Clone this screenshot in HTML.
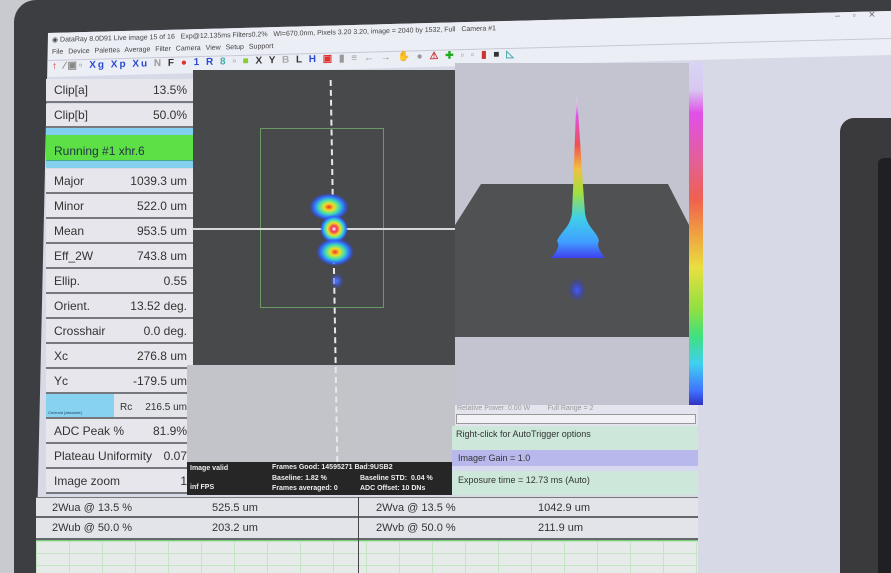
<!DOCTYPE html>
<html><head><meta charset="utf-8"><style>
*{margin:0;padding:0;box-sizing:border-box}
html{width:891px;height:573px;overflow:hidden}
body{width:891px;height:573px;overflow:hidden;background:#c9cad0;position:relative;font-family:"Liberation Sans",sans-serif}
.abs{position:absolute}
.bezel{left:14px;top:0;width:877px;height:573px;background:#3d3e41;border-top-left-radius:22px}
.screen{left:0;top:0;width:891px;height:573px;background:#d7d9e7;clip-path:polygon(48px 33px,891px 11px,891px 573px,36px 573px)}
.hdr{left:48px;top:33px;width:843px;height:44px;transform:skewY(-1.5deg);transform-origin:0 0;background:#eceef6;font-size:7px;color:#444}
.hdr .t{position:absolute;left:4px;top:3px;white-space:nowrap}
.hdr .m{position:absolute;left:4px;top:16px;white-space:nowrap;word-spacing:3px}
.hdr .tb{position:absolute;left:0;top:27px;width:843px;height:15px;border-top:1px solid #c8c8d4;font-size:10px;font-weight:bold;padding-left:4px;white-space:nowrap;letter-spacing:2px;color:#2a4ad0}
.row{position:absolute;left:46px;width:147px;background:#e6e6ec;border-bottom:2px solid #77787e;font-size:12px;color:#333}
.row span{position:absolute;left:8px;bottom:4px}
.row b{position:absolute;right:6px;bottom:4px;font-weight:normal}
.st{font-size:7px;color:#eee;position:absolute;white-space:nowrap;font-weight:bold}
.bt{position:absolute;background:#e3e4ea;border-bottom:2px solid #66676c;font-size:11px;color:#333}
.bt span{position:absolute;top:4px;white-space:nowrap}
</style></head><body>
<div class="abs bezel"></div>
<div class="abs screen"></div>
<div class="abs hdr">
 <div class="t">◉ DataRay 8.0D91 Live image 15 of 16 &nbsp; Exp@12.135ms Filters0.2% &nbsp; WI=670.0nm, Pixels 3.20 3.20, image = 2040 by 1532, Full &nbsp; Camera #1</div>
 <div class="m">File Device Palettes Average Filter Camera View Setup Support</div>
 <div class="tb"><span style="color:#d03020">↑</span> <span style="color:#888">⁄▣▫</span> Xg Xp Xu <span style="color:#999">N</span> <span style="color:#333">F</span> <span style="color:#e03030">●</span> 1 R <span style="color:#4aa">8</span> <span style="color:#888">▫</span> <span style="color:#8c3">■</span> <span style="color:#333">X Y</span> <span style="color:#aaa">B</span> <span style="color:#333">L</span> H <span style="color:#e03030">▣</span> <span style="color:#999">▮ ≡ ← → ✋ ●</span> <span style="color:#c33">⚠</span> <span style="color:#2a2">✚</span> <span style="color:#999">▫ ▫</span> <span style="color:#c33">▮</span> <span style="color:#333">■</span> <span style="color:#4aa">◺</span></div>
</div>
<!-- left panel -->
<div class="row" style="top:79px;height:24px"><span>Clip[a]</span><b>13.5%</b></div>
<div class="row" style="top:104px;height:24px"><span>Clip[b]</span><b>50.0%</b></div>
<div class="abs" style="left:46px;top:128px;width:147px;height:7px;background:#82d0ee"></div>
<div class="abs" style="left:46px;top:135px;width:147px;height:26px;background:#5de046;border-bottom:1px solid #4a8;font-size:12px;color:#234;padding:9px 0 0 8px">Running #1 xhr.6</div>
<div class="abs" style="left:46px;top:161px;width:147px;height:7px;background:#82d0ee"></div>
<div class="row" style="top:169px;height:25px"><span>Major</span><b>1039.3 um</b></div>
<div class="row" style="top:194px;height:25px"><span>Minor</span><b>522.0 um</b></div>
<div class="row" style="top:219px;height:25px"><span>Mean</span><b>953.5 um</b></div>
<div class="row" style="top:244px;height:25px"><span>Eff_2W</span><b>743.8 um</b></div>
<div class="row" style="top:269px;height:25px"><span>Ellip.</span><b>0.55</b></div>
<div class="row" style="top:294px;height:25px"><span>Orient.</span><b>13.52 deg.</b></div>
<div class="row" style="top:319px;height:25px"><span>Crosshair</span><b>0.0 deg.</b></div>
<div class="row" style="top:344px;height:25px"><span>Xc</span><b>276.8 um</b></div>
<div class="row" style="top:369px;height:25px"><span>Yc</span><b>-179.5 um</b></div>
<div class="row" style="top:394px;height:25px;background:#e3e4ea"><div class="abs" style="left:0;top:0;width:68px;height:23px;background:#86d2f0;font-size:4px;color:#246;padding:16px 0 0 2px">Centroid [absolute]</div><span style="left:74px;font-size:10px">Rc</span><b style="font-size:10px">216.5 um</b></div>
<div class="row" style="top:419px;height:25px"><span>ADC Peak %</span><b>81.9%</b></div>
<div class="row" style="top:444px;height:25px"><span>Plateau Uniformity</span><b>0.07</b></div>
<div class="row" style="top:469px;height:25px"><span>Image zoom</span><b>1</b></div>
<!-- center -->
<div class="abs" style="left:193px;top:70px;width:262px;height:295px;background:#48494b"></div>
<div class="abs" style="left:187px;top:365px;width:268px;height:97px;background:#c3c4c9"></div>
<div class="abs" style="left:260px;top:128px;width:124px;height:180px;border:1px solid #6a9a62"></div>
<div class="abs" style="left:192px;top:228px;width:263px;height:2px;background:#d8d8d8"></div>
<div class="abs" style="left:333px;top:80px;width:0;height:382px;border-left:2px dashed #e8e8e8;transform:skewX(1deg)"></div>
<svg class="abs" style="left:300px;top:185px" width="70" height="120">
<defs><radialGradient id="b"><stop offset="0" stop-color="#f03030"/><stop offset=".25" stop-color="#f0e020"/><stop offset=".5" stop-color="#40e0b0"/><stop offset=".75" stop-color="#3070ff"/><stop offset="1" stop-color="#3040ff" stop-opacity="0"/></radialGradient>
<radialGradient id="c"><stop offset="0" stop-color="#fff"/><stop offset=".2" stop-color="#f03060"/><stop offset=".45" stop-color="#f0e020"/><stop offset=".65" stop-color="#40e0c0"/><stop offset=".85" stop-color="#3070ff"/><stop offset="1" stop-color="#3040ff" stop-opacity="0"/></radialGradient>
<radialGradient id="d"><stop offset="0" stop-color="#5080ff"/><stop offset="1" stop-color="#3040ff" stop-opacity="0"/></radialGradient></defs>
<ellipse cx="29" cy="22" rx="20" ry="14" fill="url(#b)"/>
<ellipse cx="34" cy="44" rx="14" ry="14" fill="url(#c)"/>
<ellipse cx="35" cy="67" rx="19" ry="14" fill="url(#b)"/>
<ellipse cx="37" cy="96" rx="7" ry="8" fill="url(#d)"/>
</svg>
<div class="abs" style="left:187px;top:462px;width:265px;height:33px;background:#262626"></div>
<div class="st" style="left:190px;top:465px">Image valid</div>
<div class="st" style="left:190px;top:484px">inf FPS</div>
<div class="st" style="left:272px;top:464px">Frames Good: 14595271 Bad:9USB2</div>
<div class="st" style="left:272px;top:475px">Baseline: 1.82 %</div>
<div class="st" style="left:272px;top:485px">Frames averaged: 0</div>
<div class="st" style="left:360px;top:475px">Baseline STD: &nbsp;0.04 %</div>
<div class="st" style="left:360px;top:485px">ADC Offset: 10 DNs</div>
<!-- 3D -->
<div class="abs" style="left:455px;top:63px;width:234px;height:342px;background:#c3c4cf"></div>
<svg class="abs" style="left:455px;top:63px" width="234" height="342">
<defs><linearGradient id="p" x1="0" y1="0" x2="0" y2="1"><stop offset="0" stop-color="#f4f4ff"/><stop offset=".12" stop-color="#e050e8"/><stop offset=".3" stop-color="#f05050"/><stop offset=".45" stop-color="#f0c040"/><stop offset=".6" stop-color="#a0e040"/><stop offset=".75" stop-color="#40d0e8"/><stop offset=".9" stop-color="#40a0ff"/><stop offset="1" stop-color="#4040f0"/></linearGradient>
<radialGradient id="q"><stop offset="0" stop-color="#4060ff"/><stop offset="1" stop-color="#3030e0" stop-opacity="0"/></radialGradient></defs>
<polygon points="26,121 213,121 234,162 234,274 0,274 0,162" fill="#505153"/>
<path d="M122,33 C124,60 127,110 130,150 C132,165 142,168 144,178 C141,183 146,190 150,195 L96,195 C100,190 106,184 102,178 C106,168 115,165 117,150 C119,110 120,60 122,33Z" fill="url(#p)"/>
<ellipse cx="122" cy="227" rx="9" ry="12" fill="url(#q)"/>
</svg>
<div class="abs" style="left:689px;top:62px;width:14px;height:343px;background:linear-gradient(#d8d4f4 0%,#d8c8f0 8%,#e050e8 15%,#e46090 30%,#f06050 40%,#f0a040 50%,#e8e040 60%,#90e040 72%,#40e080 80%,#40d0f0 88%,#4070ff 96%,#3030c0 100%)"></div>
<div class="abs" style="left:455px;top:405px;width:243px;height:90px;background:#e4e4ee"></div>
<div class="abs" style="left:457px;top:405px;font-size:7px;color:#999;white-space:nowrap">Relative Power: 0.00 W &nbsp; &nbsp; &nbsp; &nbsp; Full Range = 2</div>
<div class="abs" style="left:456px;top:414px;width:240px;height:10px;border:1px solid #999;background:#f2f2f6"></div>
<div class="abs" style="left:452px;top:426px;width:246px;height:24px;background:#cde8da;font-size:9px;color:#333;padding:3px 0 0 4px">Right-click for AutoTrigger options</div>
<div class="abs" style="left:452px;top:450px;width:246px;height:16px;background:#b8b8ec;font-size:9px;color:#333;padding:3px 0 0 6px">Imager Gain = 1.0</div>
<div class="abs" style="left:452px;top:466px;width:246px;height:5px;background:#d8d8f0"></div>
<div class="abs" style="left:452px;top:471px;width:246px;height:24px;background:#cde8da;font-size:9px;color:#333;padding:4px 0 0 6px">Exposure time = 12.73 ms (Auto)</div>
<!-- bottom table -->
<div class="bt" style="left:36px;top:497px;width:662px;height:21px;border-top:1px solid #777"><span style="left:16px">2Wua @ 13.5 %</span><span style="left:176px">525.5 um</span><span style="left:340px">2Wva @ 13.5 %</span><span style="left:502px">1042.9 um</span></div>
<div class="bt" style="left:36px;top:518px;width:662px;height:22px"><span style="left:16px">2Wub @ 50.0 %</span><span style="left:176px">203.2 um</span><span style="left:340px">2Wvb @ 50.0 %</span><span style="left:502px">211.9 um</span></div>
<div class="abs" style="left:358px;top:497px;width:1px;height:76px;background:#444"></div>
<div class="abs" style="left:36px;top:540px;width:662px;height:33px;border-top:1px solid #7c7;background-color:#e6eae8;background-image:linear-gradient(90deg,#c4e4c4 1px,transparent 1px),linear-gradient(#c4e4c4 1px,transparent 1px);background-size:33px 12px"></div>
<div class="abs" style="left:358px;top:540px;width:1px;height:33px;background:#444"></div>
<!-- right monitor -->
<div class="abs" style="left:840px;top:118px;width:51px;height:455px;background:#3a3a3d;border-top-left-radius:14px"></div>
<div class="abs" style="left:878px;top:158px;width:13px;height:415px;background:#202022;border-top-left-radius:6px"></div>
<div class="abs" style="left:835px;top:10px;font-size:9px;color:#777;transform:rotate(-1.5deg)">–&nbsp;&nbsp;&nbsp;&nbsp; ▫&nbsp;&nbsp;&nbsp;&nbsp; ✕</div>
</body></html>
